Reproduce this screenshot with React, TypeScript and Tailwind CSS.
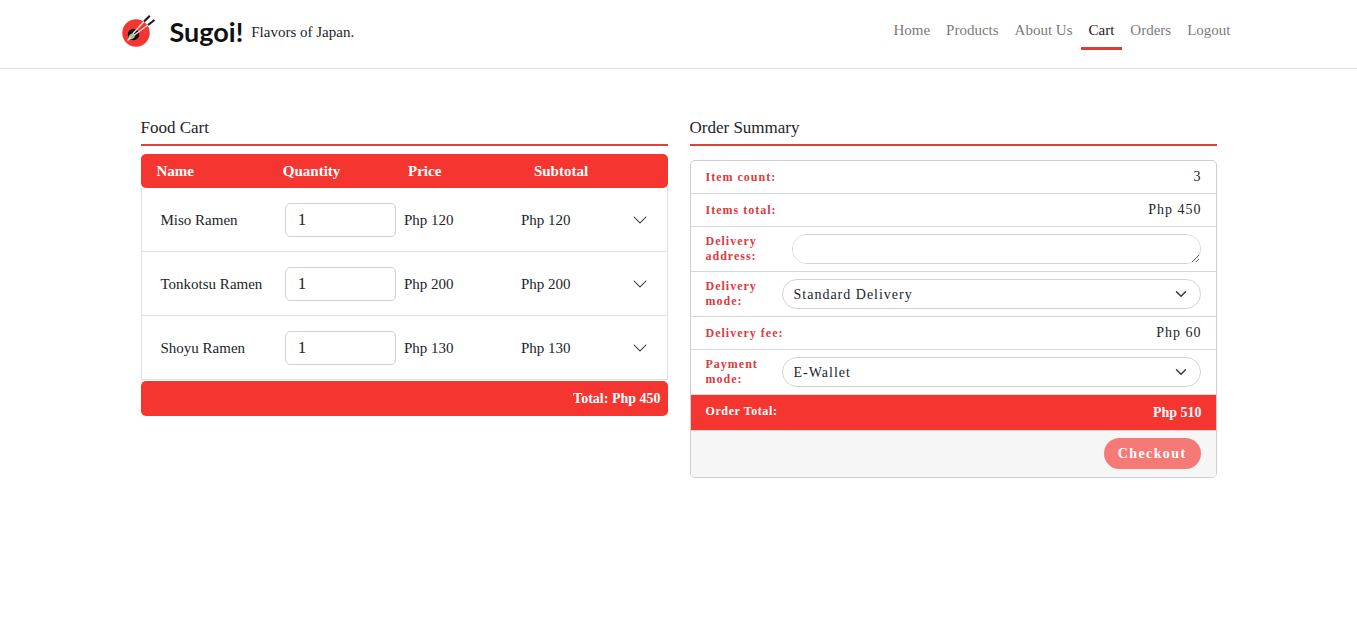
import React from "react";

const navLinks = ["Home", "Products", "About Us", "Cart", "Orders", "Logout"];

const items = [
  { name: "Miso Ramen", quantity: 1, price: 120 },
  { name: "Tonkotsu Ramen", quantity: 1, price: 200 },
  { name: "Shoyu Ramen", quantity: 1, price: 130 },
];

function Logo() {
  return (
    <svg viewBox="0 0 34 34" className="size-[34px]" aria-hidden="true">
      <circle cx="14" cy="18" r="13.7" fill="#f5352f" />
      <circle cx="11.500" cy="19.500" r="5.700" fill="#0d0b0c" />
      <path d="M6.500 24c-.3-3 1.500-5.500 5-6l1.800 2.200c-.8 3-3 4.500-6.800 3.800z" fill="#a9c39b" />
      <path d="M5.500 25.500l3-3" stroke="#dfe8d5" strokeWidth="1.400" />
      <path d="M11 18.500L22.500 6M12.500 20L26.500 9.500" stroke="#f8dcd6" strokeWidth="1.500" />
      <path d="M22 6.500L27.800.8M26 10L32.500 5" stroke="#1b1c26" strokeWidth="2.200" />
    </svg>
  );
}

function Header() {
  return (
    <header className="border-b border-[#dee2e6]">
      <div className="mx-auto flex max-w-[1120px] items-start justify-between pt-[11px] pb-[18px] pl-[3px]">
        <a href="#home" className="flex items-center pt-1">
          <Logo />
          <span className="ml-[14px] font-['Lato',sans-serif] text-[27px] leading-8 font-bold text-[#111]">Sugoi!</span>
          <span className="ml-2 text-[15px] leading-6">Flavors of Japan.</span>
        </a>
        <nav className="flex text-[15px] leading-6">
          {navLinks.map((link) => (
            <a
              key={link}
              href={"#" + link.toLowerCase().replace(" ", "-")}
              className={
                link === "Cart"
                  ? "border-b-[3px] border-[#e5392f] px-2 pt-[7px] pb-[5px] text-[#1a1a1a]"
                  : "border-b-[3px] border-transparent px-2 pt-[7px] pb-[5px] text-[#7b7b7b]"
              }
            >
              {link}
            </a>
          ))}
        </nav>
      </div>
    </header>
  );
}

function SectionTitle({ children }: { children: React.ReactNode }) {
  return (
    <h2 className="border-b-2 border-[#dc4437] pb-[6px] text-[17px] leading-5">{children}</h2>
  );
}

function FoodCart() {
  return (
    <section>
      <SectionTitle>Food Cart</SectionTitle>
      <table className="mt-2 w-full table-fixed border-separate border-spacing-0 text-left text-[15px] leading-5">
        <colgroup>
          <col className="w-[27%]" />
          <col className="w-[23%]" />
          <col className="w-[22%]" />
          <col className="w-[20%]" />
          <col className="w-[8%]" />
        </colgroup>
        <thead>
          <tr className="text-white">
            <th className="h-[34px] rounded-l-[5px] bg-[#f53530] pl-4">Name</th>
            <th className="bg-[#f53530]">Quantity</th>
            <th className="bg-[#f53530] pl-1">Price</th>
            <th className="bg-[#f53530] pl-[14px]">Subtotal</th>
            <td className="rounded-r-[5px] bg-[#f53530]" />
          </tr>
        </thead>
        <tbody>
          {items.map((item) => (
            <tr key={item.name} className="h-16">
              <td className="border-b border-l border-[#dee2e6] pl-[19px]">{item.name}</td>
              <td className="border-b border-[#dee2e6] pr-2 pl-[2px]">
                <input
                  type="number"
                  defaultValue={item.quantity}
                  aria-label={"Quantity of " + item.name}
                  className="block h-[34px] w-full rounded-[5px] border border-[#ced4da] bg-white px-3 text-[17px]"
                />
              </td>
              <td className="border-b border-[#dee2e6]">Php {item.price}</td>
              <td className="border-b border-[#dee2e6] pl-px">Php {item.price * item.quantity}</td>
              <td className="border-r border-b border-[#dee2e6]">
                <button type="button" aria-label={"Show " + item.name} className="ml-[7px] block">
                  <svg viewBox="0 0 16 16" className="size-4" fill="#212529">
                    <path d="M1.646 4.646a.5.5 0 0 1 .708 0L8 10.293l5.646-5.647a.5.5 0 0 1 .708.708l-6 6a.5.5 0 0 1-.708 0l-6-6a.5.5 0 0 1 0-.708z" />
                  </svg>
                </button>
              </td>
            </tr>
          ))}
        </tbody>
        <tfoot>
          <tr>
            <td colSpan={5} className="pt-px text-right text-[14px] font-bold text-white">
              <div className="rounded-[5px] bg-[#f53530] py-2 pr-[7px] leading-[19px]">Total: Php 450</div>
            </td>
          </tr>
        </tfoot>
      </table>
    </section>
  );
}

function SummaryLine({ label, value }: { label: string; value: string }) {
  return (
    <div className="flex justify-between border-b border-[#d5d9dd] py-2 pr-[14px] pl-[15px] leading-4">
      <span className="text-[12px] font-bold text-[#dc3a40]">{label}</span>
      <span>{value}</span>
    </div>
  );
}

function SelectLine({ id, label, options }: { id: string; label: string; options: string[] }) {
  return (
    <div className="flex items-center border-b border-[#d5d9dd] px-[15px] py-[7px]">
      <label htmlFor={id} className="w-[76px] shrink-0 text-[12px] leading-[15px] font-bold text-[#dc3a40]">
        {label}
      </label>
      <div className="relative flex-1">
        <select
          id={id}
          className="block h-[30px] w-full appearance-none rounded-full border border-[#ced4da] bg-white pr-9 pl-[11px] tracking-[1px]"
        >
          {options.map((option) => (
            <option key={option}>{option}</option>
          ))}
        </select>
        <svg
          viewBox="0 0 16 16"
          className="pointer-events-none absolute top-[9px] right-3 h-3 w-4"
          fill="none"
          stroke="#343a40"
          strokeLinecap="round"
          strokeLinejoin="round"
          strokeWidth="2"
        >
          <path d="m2 5 6 6 6-6" />
        </svg>
      </div>
    </div>
  );
}

function OrderSummary() {
  return (
    <section>
      <SectionTitle>Order Summary</SectionTitle>
      <form className="mt-[14px] overflow-hidden rounded-[5px] border border-[#cbcfd3] text-[14px] tracking-[1px]">
        <SummaryLine label="Item count:" value="3" />
        <SummaryLine label="Items total:" value="Php 450" />
        <div className="flex items-center border-b border-[#d5d9dd] px-[15px] py-[7px]">
          <label
            htmlFor="address"
            className="w-[86px] shrink-0 text-[12px] leading-[15px] font-bold text-[#dc3a40]"
          >
            Delivery address:
          </label>
          <textarea
            id="address"
            rows={1}
            className="block h-[30px] min-w-0 flex-1 rounded-[15px] border border-[#ced4da] bg-white px-3 py-1"
          />
        </div>
        <SelectLine id="delivery" label="Delivery mode:" options={["Standard Delivery", "Express Delivery"]} />
        <SummaryLine label="Delivery fee:" value="Php 60" />
        <SelectLine id="payment" label="Payment mode:" options={["E-Wallet", "Cash on Delivery"]} />
        <div className="flex justify-between bg-[#f53530] pt-2 pr-[14px] pb-[7px] pl-[15px] font-bold text-white">
          <span className="text-[12px] leading-4 tracking-wider">Order Total:</span>
          <span className="leading-5 tracking-normal">Php 510</span>
        </div>
        <div className="flex justify-end border-t border-[#d5d9dd] bg-[#f6f6f6] px-[15px] pt-[7px] pb-2">
          <button
            type="button"
            className="h-[31px] rounded-full bg-[#f57a75] px-[14px] font-bold tracking-widest text-white"
          >
            Checkout
          </button>
        </div>
      </form>
    </section>
  );
}

export default function App() {
  return (
    <div className="min-h-screen bg-white font-['Liberation_Serif',serif] text-[#212529]">
      <Header />
      <main className="mx-auto grid max-w-[1076px] grid-cols-2 items-start gap-[22px] pt-[49px]">
        <FoodCart />
        <OrderSummary />
      </main>
    </div>
  );
}
